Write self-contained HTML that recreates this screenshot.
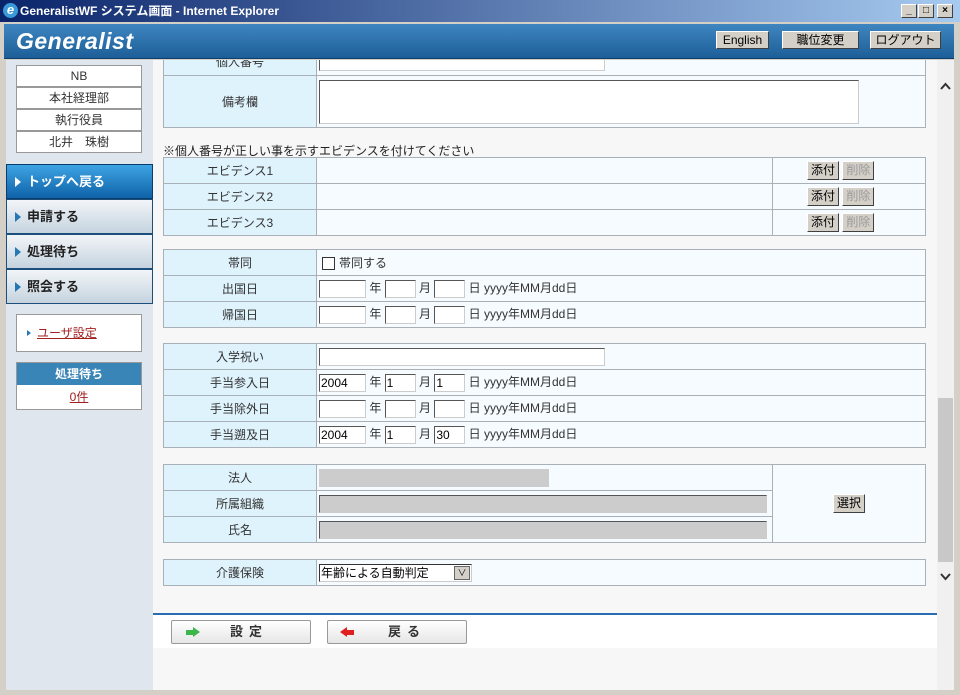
<!DOCTYPE html>
<html><head><meta charset="utf-8"><style>
*{box-sizing:border-box;margin:0;padding:0}
body{width:960px;height:695px;overflow:hidden;background:#d4d0c8;font-family:"Liberation Sans","Noto Sans CJK JP",sans-serif;font-size:12px;color:#333;position:relative}
.abs{position:absolute}
#title{left:0;top:0;width:960px;height:22px;background:linear-gradient(90deg,#0a246a,#a6caf0);color:#fff;font-weight:bold;font-size:12px;line-height:22px;padding-left:20px}
.wb{top:4px;width:16px;height:14px;background:#d4d0c8;border:1px solid;border-color:#fff #404040 #404040 #fff;color:#000;font-size:10px;line-height:12px;text-align:center;font-weight:bold}
#hdr{left:4px;top:24px;width:950px;height:35px;background:linear-gradient(#3f86c0,#1d5e98);border-bottom:1px solid #0e3f6e}
.logo{left:12px;top:4px;color:#fff;font-size:23px;font-style:italic;font-weight:bold;letter-spacing:0.5px}
.hb{top:7px;height:18px;background:#d4d0c8;border:1px solid;border-color:#fff #404040 #404040 #fff;color:#000;font-size:12px;text-align:center;line-height:16px}
#side{left:6px;top:60px;width:147px;height:630px;background:#dfe6ee}
.info{left:10px;width:126px;height:22px;background:#fff;border:1px solid #999;text-align:center;line-height:20px;font-size:12px;color:#333}
.nav{left:0;width:147px;height:35px;border:1px solid #1d4f7c;background:linear-gradient(#f2f5f8,#c5d3df);font-weight:bold;font-size:13px;color:#222;line-height:33px;padding-left:20px}
.nav:before{content:"";position:absolute;left:8px;top:12px;border-left:6px solid #2678b5;border-top:5px solid transparent;border-bottom:5px solid transparent}
.nav.on:before{border-left-color:#fff}
#main{left:153px;top:60px;width:784px;height:630px;background:#f7f7f7;overflow:hidden}
#sb{left:937px;top:60px;width:17px;height:630px;background:#f0f0f0}
table{position:absolute;left:10px;width:763px;border-collapse:collapse;background:#f5fbff}
td{border:1px solid #a9b0b8;height:26px;font-size:12px;padding:0 2px}
td.l{width:153px;background:#dff3fd;text-align:center}
.in{display:inline-block;height:18px;background:#fff;border:1px solid;border-color:#555 #ccc #ccc #555;vertical-align:middle;font-size:12px;line-height:16px;padding-left:1px;color:#000}
.gb{display:inline-block;height:19px;background:#d4d0c8;border:1px solid;border-color:#fff #404040 #404040 #fff;font-size:12px;line-height:17px;padding:0 3px;color:#000;vertical-align:middle}
.dis{color:#999}
.bb{top:560px;height:24px;border:1px solid #999;border-radius:2px;background:linear-gradient(#fff,#e6e6e6);font-weight:bold;font-size:13px;letter-spacing:6px;line-height:22px}
</style></head><body>
<div class="abs" id="title"><span style="position:absolute;left:3px;top:3px;width:15px;height:15px;border-radius:50%;background:#3a9ad9;color:#fff;font-style:italic;font-size:13px;line-height:14px;text-align:center">e</span>GeneralistWF システム画面 - Internet Explorer</div>
<div class="abs wb" style="left:901px">_</div><div class="abs wb" style="left:918px">□</div><div class="abs wb" style="left:937px">×</div>
<div class="abs" id="hdr">
<div class="abs logo">Generalist</div>
<div class="abs hb" style="left:712px;width:53px">English</div>
<div class="abs hb" style="left:778px;width:77px">職位変更</div>
<div class="abs hb" style="left:866px;width:71px">ログアウト</div>
</div>
<div class="abs" id="side">
<div class="abs info" style="top:5px">NB</div>
<div class="abs info" style="top:27px">本社経理部</div>
<div class="abs info" style="top:49px">執行役員</div>
<div class="abs info" style="top:71px">北井　珠樹</div>
<div class="abs nav on" style="top:104px;background:linear-gradient(#3ea4e4,#0f62a8);color:#fff;border-color:#0b3d6c">トップへ戻る</div>
<div class="abs nav" style="top:139px">申請する</div>
<div class="abs nav" style="top:174px">処理待ち</div>
<div class="abs nav" style="top:209px">照会する</div>
<div class="abs" style="left:10px;top:254px;width:126px;height:38px;background:#fff;border:1px solid #999;line-height:36px;padding-left:20px"><span style="position:absolute;left:10px;top:15px;border-left:4px solid #2678b5;border-top:3px solid transparent;border-bottom:3px solid transparent"></span><span style="color:#a02020;text-decoration:underline;font-size:12px">ユーザ設定</span></div>
<div class="abs" style="left:10px;top:302px;width:126px;height:48px;background:#fff;border:1px solid #999">
<div style="height:22px;background:#3a85b8;color:#fff;font-weight:bold;text-align:center;line-height:22px">処理待ち</div>
<div style="text-align:center;line-height:24px;color:#a02020;text-decoration:underline">0件</div></div>
</div>
<div class="abs" id="main">
<table style="top:-13px"><tr><td class="l" style="height:28px">個人番号</td><td><span class="in" style="width:286px"></span></td></tr>
<tr><td class="l" style="height:52px">備考欄</td><td><span class="in" style="width:540px;height:44px"></span></td></tr></table>
<div class="abs" style="left:10px;top:82px;font-size:12px;color:#222">※個人番号が正しい事を示すエビデンスを付けてください</div>
<table style="top:97px"><tr><td class="l" style="height:25px">エビデンス1</td><td></td><td style="width:153px;text-align:left;padding-left:34px"><span class="gb">添付</span> <span class="gb dis">削除</span></td></tr>
<tr><td class="l" style="height:25px">エビデンス2</td><td></td><td style="padding-left:34px"><span class="gb">添付</span> <span class="gb dis">削除</span></td></tr>
<tr><td class="l" style="height:25px">エビデンス3</td><td></td><td style="padding-left:34px"><span class="gb">添付</span> <span class="gb dis">削除</span></td></tr></table>
<table style="top:189px"><tr><td class="l">帯同</td><td><span class="in" style="width:13px;height:13px;border:1px solid #333;margin:0 4px 0 3px"></span>帯同する</td></tr>
<tr><td class="l">出国日</td><td><span class="in" style="width:47px"></span> 年 <span class="in" style="width:31px"></span> 月 <span class="in" style="width:31px"></span> 日 yyyy年MM月dd日</td></tr>
<tr><td class="l">帰国日</td><td><span class="in" style="width:47px"></span> 年 <span class="in" style="width:31px"></span> 月 <span class="in" style="width:31px"></span> 日 yyyy年MM月dd日</td></tr></table>
<table style="top:283px"><tr><td class="l">入学祝い</td><td><span class="in" style="width:286px"></span></td></tr>
<tr><td class="l">手当参入日</td><td><span class="in" style="width:47px">2004</span> 年 <span class="in" style="width:31px">1</span> 月 <span class="in" style="width:31px">1</span> 日 yyyy年MM月dd日</td></tr>
<tr><td class="l">手当除外日</td><td><span class="in" style="width:47px"></span> 年 <span class="in" style="width:31px"></span> 月 <span class="in" style="width:31px"></span> 日 yyyy年MM月dd日</td></tr>
<tr><td class="l">手当遡及日</td><td><span class="in" style="width:47px">2004</span> 年 <span class="in" style="width:31px">1</span> 月 <span class="in" style="width:31px">30</span> 日 yyyy年MM月dd日</td></tr></table>
<table style="top:404px"><tr><td class="l">法人</td><td><span class="in" style="width:230px;background:#ccc;border-color:#ccc"></span></td><td rowspan="3" style="width:153px;text-align:center"><span class="gb">選択</span></td></tr>
<tr><td class="l">所属組織</td><td><span class="in" style="width:448px;background:#ccc"></span></td></tr>
<tr><td class="l">氏名</td><td><span class="in" style="width:448px;background:#ccc"></span></td></tr></table>
<table style="top:499px"><tr><td class="l" style="height:24px">介護保険</td><td><span class="in" style="width:153px;border-color:#333 #ccc #ccc #333;position:relative">年齢による自動判定<span style="position:absolute;right:1px;top:1px;width:16px;height:14px;background:#d4d0c8;border:1px solid #666;font-size:9px;text-align:center;line-height:12px">∨</span></span></td></tr></table>
<div class="abs" style="left:0;top:553px;width:788px;height:35px;background:#fff;border-top:2px solid #2a6cb0"></div>
<div class="abs bb" style="left:18px;width:140px;padding-left:58px"><span style="position:absolute;left:14px;top:6px;width:14px;height:10px;"><span style="position:absolute;left:0;top:3px;width:7px;height:5px;background:#3cb54a"></span><span style="position:absolute;left:7px;top:0;border-left:7px solid #3cb54a;border-top:5px solid transparent;border-bottom:5px solid transparent"></span></span>設定</div>
<div class="abs bb" style="left:174px;width:140px;padding-left:60px"><span style="position:absolute;left:12px;top:6px;width:14px;height:10px"><span style="position:absolute;left:7px;top:3px;width:7px;height:5px;background:#e02020"></span><span style="position:absolute;left:0;top:0;border-right:7px solid #e02020;border-top:5px solid transparent;border-bottom:5px solid transparent"></span></span>戻る</div>
</div>
<div class="abs" id="sb">
<svg class="abs" style="left:3px;top:22px" width="11" height="8"><path d="M1 7 L5.5 2 L10 7" stroke="#333" stroke-width="2" fill="none"/></svg>
<div class="abs" style="left:1px;top:338px;width:15px;height:164px;background:#c8c8c8"></div>
<svg class="abs" style="left:3px;top:513px" width="11" height="8"><path d="M1 1 L5.5 6 L10 1" stroke="#333" stroke-width="2" fill="none"/></svg>
</div>
</body></html>
